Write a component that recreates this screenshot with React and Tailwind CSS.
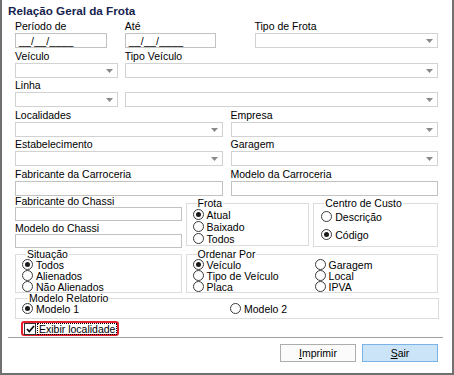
import React from 'react';

function Arrow() {
  return (
    <svg width="7" height="4" viewBox="0 0 7 4" className="shrink-0">
      <path d="M0 0h7L3.5 4z" fill="#8a8a8a" />
    </svg>
  );
}

function Field({ label, w, select, mask, className = '' }) {
  return (
    <div className={`flex flex-col ${className}`} style={{ width: w }}>
      <div className="h-[13px] leading-[13px] whitespace-nowrap">{label || '\u00a0'}</div>
      <div
        className={`h-[15px] flex items-center bg-white border ${
          select ? 'border-[#d2d2d2] justify-end pr-[4px]' : 'border-[#c2c2c2] pl-[3px]'
        }`}
      >
        {select && <Arrow />}
        {mask && <span className="leading-[12px] tracking-[0.2px]">__/__/____</span>}
      </div>
    </div>
  );
}

function Radio({ checked, label, className = '' }) {
  return (
    <div className={`flex items-center gap-[3px] whitespace-nowrap h-[11px] ${className}`}>
      <span className="w-[11px] h-[11px] rounded-full border border-[#3a3a3a] bg-white flex items-center justify-center shrink-0">
        {checked && <span className="w-[5px] h-[5px] rounded-full bg-[#1a1a1a]" />}
      </span>
      <span className="leading-[10px]">{label}</span>
    </div>
  );
}

function Group({ title, className = '', children, legendClass = 'ml-[4px] leading-[10px]' }) {
  return (
    <fieldset className={`border border-[#dcdcdc] ${className}`}>
      <legend className={`${legendClass} px-[1px]`}>{title}</legend>
      {children}
    </fieldset>
  );
}

export default function App() {
  return (
    <div className="w-[454px] h-[375px] bg-white border-l-2 border-r-2 border-b-2 border-[#707070] font-['Liberation_Sans',Arial,sans-serif] text-[10.5px] text-black flex flex-col overflow-hidden">
      {/* Title */}
      <div className="h-[20px] pt-[4px] pl-[6px] leading-[13px] font-bold text-[11.7px] text-[#16234f]">
        Relação Geral da Frota
      </div>

      <div className="pl-[13px] pr-[14px] flex flex-col">
        {/* Row 1 */}
        <div className="flex">
          <Field label="Período de" w={92} mask />
          <Field label="Até" w={91} mask className="ml-[18px]" />
          <Field label="Tipo de Frota" w={184} select className="ml-[39px]" />
        </div>

        {/* Row 2 */}
        <div className="flex mt-[2px]">
          <Field label="Veículo" w={103} select />
          <Field label="Tipo Veículo" w={314} select className="ml-[7px]" />
        </div>

        {/* Row 3 */}
        <div className="flex mt-[1px]">
          <Field label="Linha" w={103} select />
          <Field label="" w={314} select className="ml-[7px]" />
        </div>

        {/* Row 4 */}
        <div className="flex mt-[2px]">
          <Field label="Localidades" w={208} select />
          <Field label="Empresa" w={208} select className="ml-[8px]" />
        </div>

        {/* Row 5 */}
        <div className="flex mt-[1px]">
          <Field label="Estabelecimento" w={208} select />
          <Field label="Garagem" w={208} select className="ml-[8px]" />
        </div>

        {/* Row 6 */}
        <div className="flex mt-[2px]">
          <Field label="Fabricante da Carroceria" w={208} />
          <Field label="Modelo da Carroceria" w={208} className="ml-[8px]" />
        </div>

        {/* Row 7: chassi + frota + centro de custo */}
        <div className="flex">
          <div className="w-[167px] flex flex-col">
            <div className="h-[11px] leading-[11px]">Fabricante do Chassi</div>
            <div className="h-[14px] border border-[#c2c2c2]" />
            <div className="h-[12px] leading-[12px] mt-[1px]">Modelo do Chassi</div>
            <div className="h-[14px] border border-[#c2c2c2]" />
          </div>
          <Group title="Frota" legendClass="ml-[4px] leading-[11px]" className="w-[124px] h-[48px] ml-[4px] mt-[2px] pl-[6px]">
            <div className="flex flex-col gap-[1px]">
              <Radio checked label="Atual" />
              <Radio label="Baixado" />
              <Radio label="Todos" />
            </div>
          </Group>
          <Group title="Centro de Custo" legendClass="ml-[3px] leading-[11px]" className="w-[125px] h-[49px] ml-[4px] mt-[2px] pl-[7px]">
            <div className="flex flex-col mt-[2px]">
              <Radio label="Descrição" />
              <Radio checked label="Código" className="mt-[7px]" />
            </div>
          </Group>
        </div>

        {/* Row 8: situação + ordenar por */}
        <div className="flex mt-[1px]">
          <Group title="Situação" className="w-[167px] h-[44px] pl-[6px]">
            <div className="flex flex-col">
              <Radio checked label="Todos" />
              <Radio label="Alienados" />
              <Radio label="Não Alienados" />
            </div>
          </Group>
          <Group title="Ordenar Por" className="w-[253px] h-[44px] ml-[4px] pl-[6px]">
            <div className="flex">
              <div className="flex flex-col w-[122px]">
                <Radio checked label="Veículo" />
                <Radio label="Tipo de Veículo" />
                <Radio label="Placa" />
              </div>
              <div className="flex flex-col">
                <Radio label="Garagem" />
                <Radio label="Local" />
                <Radio label="IPVA" />
              </div>
            </div>
          </Group>
        </div>

        {/* Modelo relatorio */}
        <Group title="Modelo Relatorio" legendClass="ml-[6px] leading-[10px]" className="w-[424px] h-[26px] pl-[6px]">
          <div className="flex">
            <Radio checked label="Modelo 1" className="w-[208px]" />
            <Radio label="Modelo 2" />
          </div>
        </Group>

        {/* Checkbox */}
        <div className="mt-[2px] ml-[6px] w-[98px] h-[15px] border-2 border-[#e3202c] rounded-[3px] flex items-center pl-[1px]">
          <span className="w-[12px] h-[12px] border border-[#333] bg-white flex items-center justify-center shrink-0">
            <svg width="9" height="8" viewBox="0 0 9 8">
              <path d="M1 4l2.3 2.5L8 1" stroke="#111" strokeWidth="1.8" fill="none" />
            </svg>
          </span>
          <span className="ml-[1px] border border-dotted border-black leading-[10px] px-[1px] whitespace-nowrap">
            Exibir localidade
          </span>
        </div>
      </div>

      {/* Separator */}
      <div className="mt-[1px] ml-[6px] mr-[9px] border-t border-[#a0a0a0] border-b border-b-white" />

      {/* Buttons */}
      <div className="flex justify-end pr-[14px] mt-[5px] gap-[6px]">
        <button className="w-[76px] h-[18px] bg-[#fbfbfb] border border-[#adadad] leading-[16px]">
          <span className="underline">I</span>mprimir
        </button>
        <button className="w-[76px] h-[18px] bg-[#cce4f7] border border-[#7ab3e8] leading-[16px]">
          <span className="underline">S</span>air
        </button>
      </div>
    </div>
  );
}
